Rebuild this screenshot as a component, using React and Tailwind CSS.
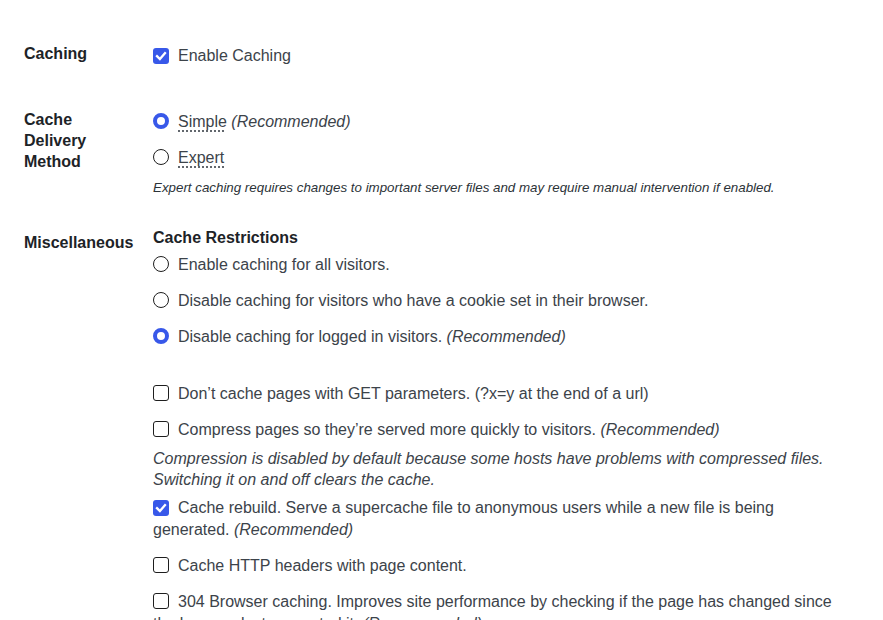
import React from 'react';

const Check = ({ checked }) =>
  checked ? (
    <span className="inline-flex items-center justify-center w-4 h-4 rounded-[3px] bg-[#3858e9] mr-[9px] align-[-2px]">
      <svg width="14" height="14" viewBox="0 0 14 14" fill="none">
        <path d="M3 7.2 L5.9 10 L11 4.2" stroke="white" strokeWidth="2.3" strokeLinecap="square" />
      </svg>
    </span>
  ) : (
    <span className="inline-block w-4 h-4 rounded-[3px] border border-[#1e1e1e] bg-white mr-[9px] align-[-2px]" />
  );

const Radio = ({ checked }) =>
  checked ? (
    <span className="inline-block w-4 h-4 rounded-full border-[4px] border-[#3858e9] bg-white mr-[9px] align-[-2px]" />
  ) : (
    <span className="inline-block w-4 h-4 rounded-full border border-[#1e1e1e] bg-white mr-[9px] align-[-2px]" />
  );

const Item = ({ children, className = '' }) => (
  <div className={'leading-[22px] ' + className}>{children}</div>
);

// th / td pair; thClass nudges the label against the first line of the field
const Row = ({ label, children, thClass = '', className = '' }) => (
  <div className={'flex ' + className}>
    <div className={'w-[129px] shrink-0 pr-[10px] font-bold text-[#1d2327] leading-[21px] ' + thClass}>{label}</div>
    <div className="w-[690px] text-[#3c434a]">{children}</div>
  </div>
);

export default function App() {
  return (
    <div
      className="bg-white pl-6 pt-[45px] text-[16px] overflow-hidden h-[620px]"
      style={{ fontFamily: '"Liberation Sans", Arial, sans-serif' }}
    >
      <Row label="Caching" thClass="-mt-[2px]">
        <Item><Check checked />Enable Caching</Item>
      </Row>

      <Row label={<>Cache<br />Delivery<br />Method</>} thClass="-mt-[2px]" className="mt-[44px]">
        <Item className="mb-[14px]">
          <Radio checked />
          <span className="underline decoration-dotted underline-offset-[4px]">Simple</span> <i>(Recommended)</i>
        </Item>
        <Item><Radio /><span className="underline decoration-dotted underline-offset-[4px]">Expert</span></Item>
        <p className="italic text-[13.33px] leading-[18px] mt-[10px] text-[#2c3338]">
          Expert caching requires changes to important server files and may require manual intervention if enabled.
        </p>
      </Row>

      <Row label="Miscellaneous" thClass="pt-[5px]" className="mt-[30px]">
        <div className="font-bold text-[#1d2327] leading-[22px] mb-[5px]">Cache Restrictions</div>
        <Item className="mb-[14px]"><Radio />Enable caching for all visitors.</Item>
        <Item className="mb-[14px]"><Radio />Disable caching for visitors who have a cookie set in their browser.</Item>
        <Item><Radio checked />Disable caching for logged in visitors. <i>(Recommended)</i></Item>

        <div className="h-[35px]" />

        <Item className="mb-[14px]"><Check />Don’t cache pages with GET parameters. (?x=y at the end of a url)</Item>
        <Item><Check />Compress pages so they’re served more quickly to visitors. <i>(Recommended)</i></Item>
        <p className="italic leading-[21px] mt-[7px] mb-[7px]">
          Compression is disabled by default because some hosts have problems with compressed files. Switching it on and off clears the cache.
        </p>
        <Item className="mb-[14px]">
          <Check checked />Cache rebuild. Serve a supercache file to anonymous users while a new file is being generated. <i>(Recommended)</i>
        </Item>
        <Item className="mb-[14px]"><Check />Cache HTTP headers with page content.</Item>
        <Item>
          <Check />304 Browser caching. Improves site performance by checking if the page has changed since the browser last requested it. <i>(Recommended)</i>
        </Item>
      </Row>
    </div>
  );
}
